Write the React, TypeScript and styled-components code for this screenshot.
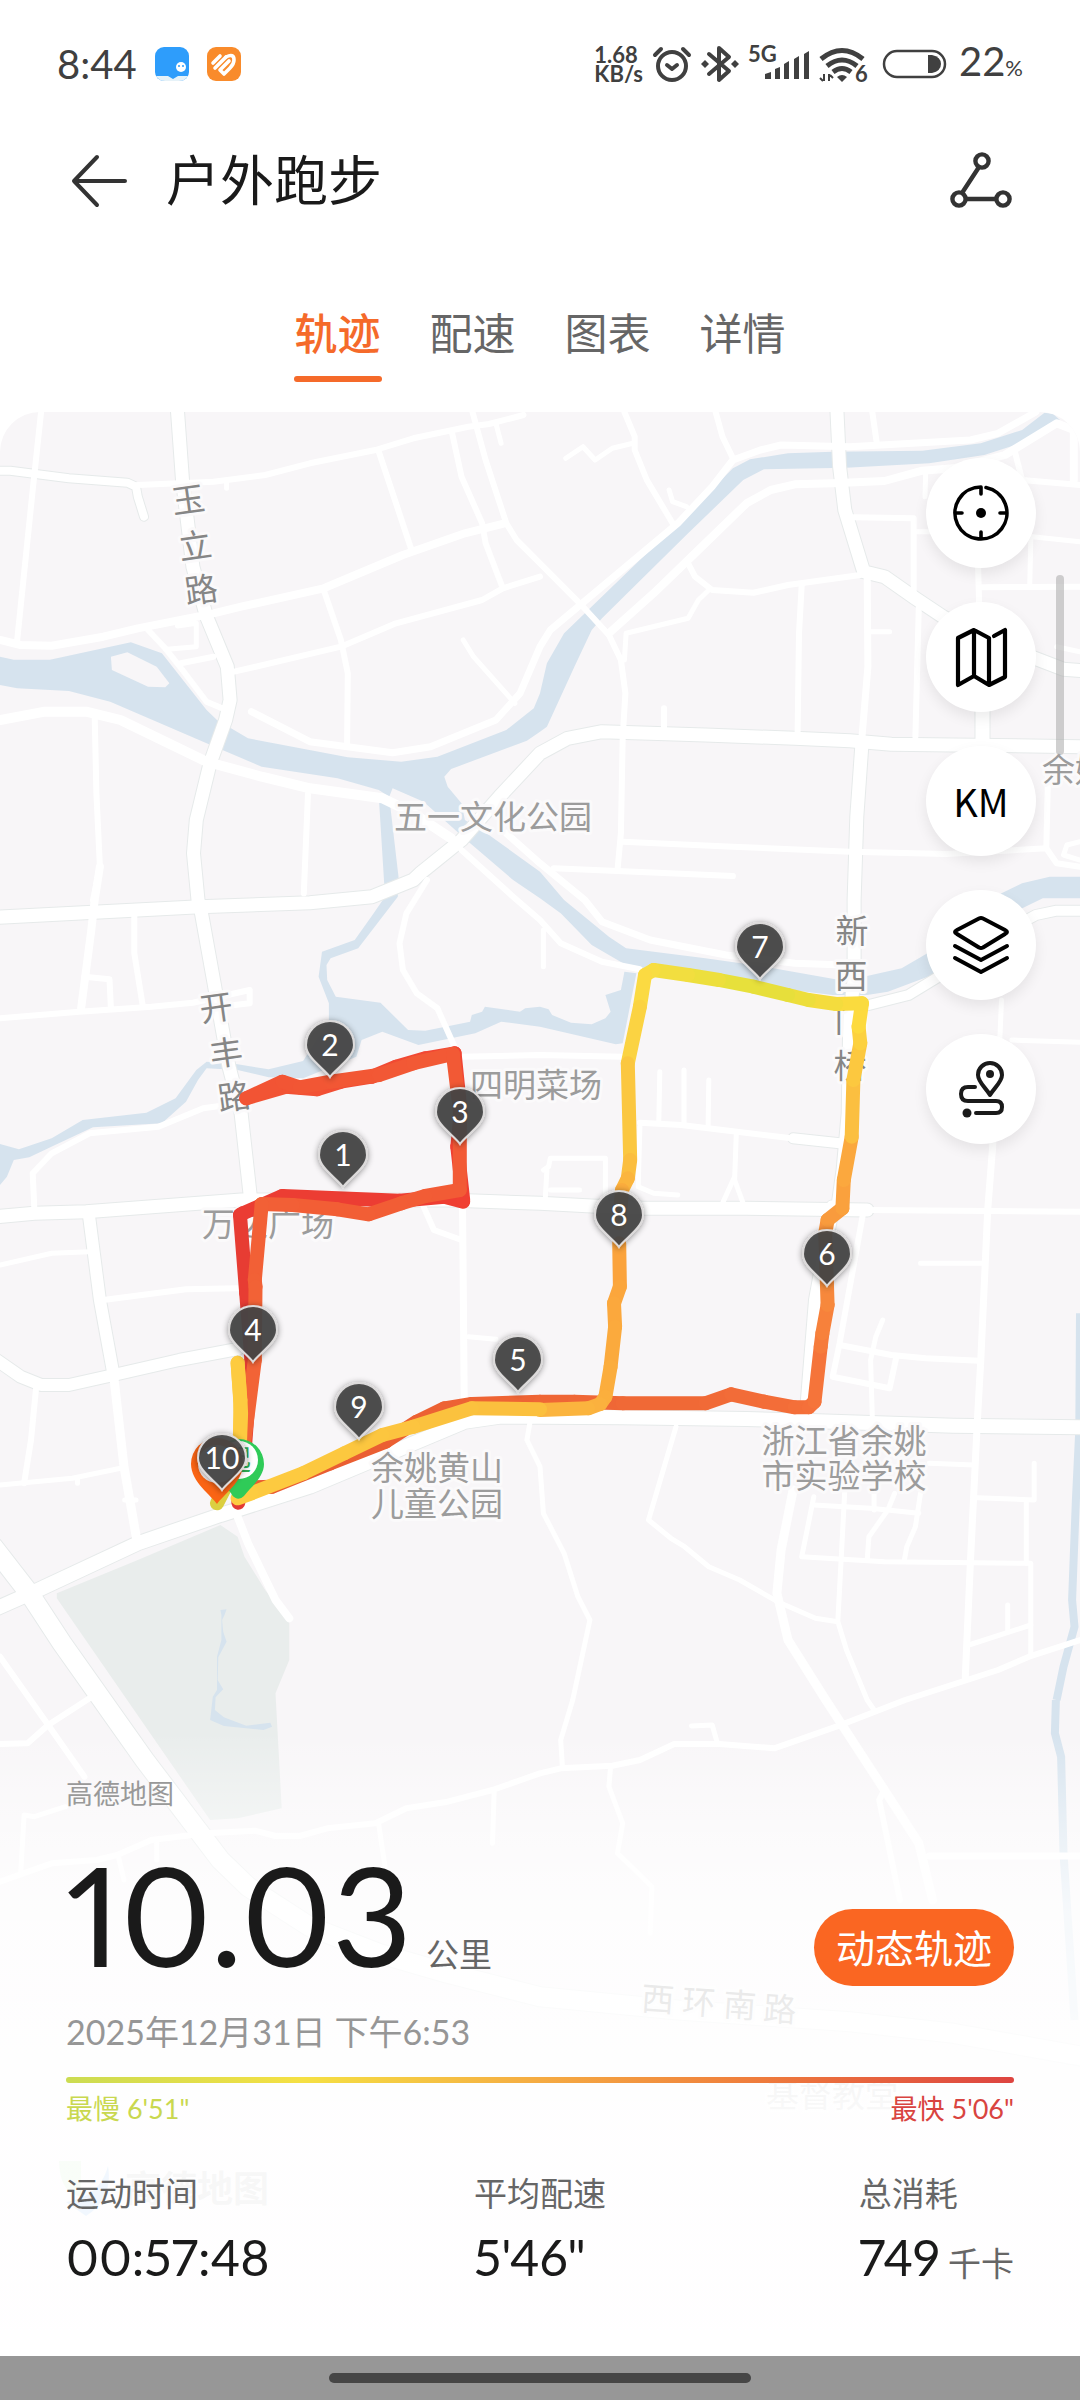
import React from "react";
import styled, { createGlobalStyle, css } from "styled-components";

const GlobalStyle = createGlobalStyle`
  *, *::before, *::after { box-sizing: border-box; }
  html, body { margin: 0; background: #fff; }
  body {
    font-family: Lato, "Noto Sans CJK SC", sans-serif;
    color: #1a1a1a;
    overflow-x: hidden;
  }
  button { font: inherit; color: inherit; border: 0; padding: 0; background: none; cursor: pointer; }
  svg { display: block; overflow: visible; }
`;

/* ---------- map geometry ---------- */

/* Geometry is stored tile by tile. A letter switches the tile, numbers are
   x/y pairs in that tile's own grid. */
const TILES: Record<string, [number, number]> = {
  A: [0, 400],
  B: [540, 400],
  C: [0, 880],
  D: [540, 880],
  E: [0, 1200],
  F: [540, 1200],
  G: [0, 1560],
  H: [540, 1700],
};
const UNIT_X = 540 / 1568;
const UNIT_Y = 1 / 3;

type Point = [number, number];

function points(spec: string): Point[] {
  const out: Point[] = [];
  let tile: Point = [0, 0];
  let pendingX: number | null = null;
  for (const token of spec.split(/[\s,]+/)) {
    if (TILES[token]) {
      tile = TILES[token];
    } else if (pendingX === null) {
      pendingX = Number(token);
    } else {
      out.push([
        Math.round((tile[0] + pendingX * UNIT_X) * 10) / 10,
        Math.round((tile[1] + Number(token) * UNIT_Y) * 10) / 10,
      ]);
      pendingX = null;
    }
  }
  return out;
}

const line = (spec: string) => "M" + points(spec).map((p) => p.join(" ")).join("L");
const area = (spec: string) => line(spec) + "Z";

const WATER = [
  "A 0 770,40 779,145 779,380 727,470 760,600 930,630 960,720 1015,1010 1072,1165 1085,1270 1070,1470 990,1550 925,1568 880 B 20 790,70 700,125 645,400 370,560 205,610 178,720 160,850 155,1110 152,1280 130,1400 90,1465 38,1490 42,1510 60,1380 135,1290 165,1130 190,890 203,650 208,590 240,430 400,180 655,150 690,100 800,20 980,0 995 A 1530 1022,1310 1107,1290 1130,1300 1160,1340 1210,1350 1260,1420 1305,1568 1415 B 70 1500 D 200 170,250 205,480 235,640 258,870 300,940 290,1050 265,1125 220,1340 40,1400 10,1480 -10,1568 -10,1568 55,1460 55,1390 90,1280 200,1140 285,1010 335,950 345,850 345,770 335,300 275,250 255,150 195,60 100,0 55 C 1490 0 A 1360 1325,1300 1270,1230 1205,1140 1165,1130 1190,1100 1170,980 1135,760 1100,600 1030,320 905,200 873,50 865,0 855",
  "A 1100 1190,1130 1190,1157 1430 C 1155 50,1040 205,960 235,948 255,950 300,975 350,1105 368,1185 450,1235 452,1365 425,1370 405,1400 395,1408 380,1510 395,1525 385,1568 380 D 25 388,35 405,90 428,150 433,190 415,205 395,190 345,235 330,245 275,280 280,240 490,220 493,0 440 C 1455 425,1380 460,1215 495,1110 455,1050 480,1035 530,880 595,780 592,690 570,600 565,575 600,540 665,470 730,270 742,160 795,85 832,40 840,20 890,0 915,0 792,55 808,150 775,240 720,425 698,510 655,570 570,600 545,690 553,780 568,880 543,955 420,955 370,925 290,935 215,1030 180,1085 100,1118 50",
];
const ISLAND = "A 322 770,370 757,455 800,492 850,480 862,430 860,325 810";
const PARK =
  "E 165 1180,400 1080,640 975,690 1010,710 1070 G 770 90,840 180,840 300,800 400,818 745,690 775,610 780,165 115";
const POND =
  "G 640 150,658 148,652 165,645 180,648 215,658 245,634 292,632 360,648 388,626 412,624 450,650 472,715 497,785 488,790 500,765 510,650 498,610 480,618 410,630 390,630 290,643 240,643 165";
const CANALS = [
  "F 1568 340,1566 690,1556 900,1545 1200,1552 1280,1520 1400,1500 1500",
  "H 1498 0,1495 100,1513 170,1520 460,1552 960",
];

/* [width, geometry] */
const MAJOR: [number, string][] = [
  [13, "A 515 30,530 240,560 500,600 650,660 800,668 900,655 960,610 1090,570 1260,562 1360,575 1500 C 585 100,620 300,665 560,700 700,728 960"],
  [8, "A 0 212,30 212,200 235,370 248,395 260,400 290,418 350"],
  [13, "C -10 112,580 80,900 68,1080 50,1200 0 A 1220 1420,1340 1320,1450 1190,1568 1060 B 80 1015,180 995,480 1005,740 1015,900 1022,1020 1033,1200 1035,1580 1040"],
  [13, "B 862 30,870 200,885 330,940 515,1000 530,1090 595,1170 650,1300 720,1450 780,1520 808,1580 812"],
  [13, "B 935 1030,920 1250,912 1500 D 912 300,900 400,895 700,880 870,865 980 F 850 20,800 300,775 620"],
  [13, "C -10 1010,100 1000,250 995,700 960,1300 960,1568 970 D 150 978,300 985,600 985,950 990"],
  [14, "E -10 1225,110 1170,400 1030,640 945,900 860,1350 665,1450 650,1568 650 F 240 652,600 657,700 660,1200 677,1580 682"],
  [19, "G -20 -40,85 100,180 250,420 600,640 900,720 980,900 1100,1100 1180,1300 1240 H 0 890,400 930,900 965,1200 1000,1580 1070"],
  [12, "E 258 45,290 300,330 525"],
  [12, "E -10 480,60 530,120 555,200 555,330 525,520 480,690 447"],
  [14, "B 1285 930,1285 1030"],
  [10, "D 955 375,1070 345,1150 295,1290 190,1440 105,1500 92,1580 92"],
  [10, "D 735 775,870 790"],
];

const MINOR: [number, string][] = [
  [10, "A 0 960,130 935,250 935,350 960,600 1085,760 1130,900 1165,1110 1195,1200 1240,1310 1315"],
  [8, "A 0 720,60 735,150 737,300 710,400 685,620 640,700 620,940 565,1170 465,1350 400,1465 370"],
  [6, "A 120 30,95 270,50 720"],
  [6, "A 400 255,620 245,770 225,900 190,1090 150,1200 115,1360 80,1420 72,1520 45"],
  [5, "A 658 240,658 265"],
  [6, "A 1100 155,1150 310,1195 450"],
  [6, "A 1372 36,1410 180,1470 370,1500 420,1568 490 B 125 620,200 705,235 780,248 880,240 1010,235 1300,225 1410"],
  [6, "A 1312 95,1340 230,1400 370,1410 430,1460 565"],
  [5, "A 1440 70,1455 130"],
  [6, "A 680 815,990 740,1150 670,1400 600,1460 565,1568 530"],
  [6, "A 940 570,990 720,1010 820,1008 1030"],
  [7, "A 730 935,900 1025,1140 1058,1250 1040,1440 960,1510 880,1568 740 B 30 690,400 370,500 260,560 180,640 150,700 135,900 140,1250 120,1330 100,1440 36"],
  [5, "A 1345 720,1375 770,1495 910"],
  [6, "A 430 690,480 745,530 810,600 905,645 925"],
  [5, "A 485 748,570 740,570 670,515 678"],
  [6, "A 525 790,620 770"],
  [6, "A 275 950,280 1180,290 1400,270 1500"],
  [8, "A 290 1400,275 1500 C 265 150,235 390"],
  [6, "A 895 1165,882 1480"],
  [6, "C 1240 0,1180 100,1160 190,1170 270,1210 340,1270 385,1320 500"],
  [6, "A 1340 1350,1490 1490 C 1568 120 D 60 190,180 245,290 268"],
  [7, "A 1470 1300,1568 1390 B 130 1500 D 180 125,320 180,540 225,740 250,880 255"],
  [6, "B 245 36,275 110,275 150,310 240,385 370"],
  [5, "B 75 175,125 140,160 180,210 145,270 130"],
  [6, "B 510 36,530 110,560 175"],
  [5, "B 375 270,385 305,425 320"],
  [6, "B 965 36,978 130"],
  [8, "B 200 700,330 580,430 480,600 310,670 270,740 253,850 250,1000 243,1110 212,1200 205,1350 165,1500 70,1550 90,1550 240"],
  [6, "B 430 490,450 530,500 570,620 578,720 555,930 525"],
  [5, "B 490 570,460 600,430 655,250 700,245 780"],
  [6, "B 760 555,752 700,748 1000"],
  [7, "B 950 530,952 800,935 1010"],
  [5, "B 955 695,1015 695"],
  [6, "B 910 352,1085 355,1085 580"],
  [5, "B 1085 395,1130 395"],
  [5, "B 1120 215,1118 290"],
  [6, "B 1100 620,1090 1010"],
  [6, "B 1380 160,1400 240,1568 255"],
  [5, "B 1430 410,1568 425"],
  [5, "B 1425 420,1422 560"],
  [6, "B 1272 500,1275 610"],
  [6, "B 1280 562,1568 560"],
  [5, "B 1500 740,1568 755"],
  [6, "B 360 925,360 985"],
  [6, "B 240 1325,560 1340,900 1355,1180 1362,1470 1345,1500 1390,1568 1400"],
  [6, "B 1475 1130,1470 1345"],
  [5, "B 1568 1325,1530 1335,1520 1365,1568 1380"],
  [6, "B 40 1405,560 1428"],
  [6, "C 0 415,230 395,440 380,560 368,725 330,725 370,600 385"],
  [6, "C 245 290,318 298,322 385"],
  [6, "C 390 100,390 220,415 380"],
  [6, "C 100 990,95 880,150 820,260 760,460 740,590 685,680 672"],
  [6, "C 1340 530,1568 525 D 240 530"],
  [6, "C 1230 980,1260 1050,1340 1080"],
  [7, "C 1343 975,1345 1200 E 1348 600"],
  [5, "E 1360 410,1440 418"],
  [5, "C 0 1155,150 1120,260 1115"],
  [6, "E 300 300,540 268,690 265"],
  [9, "E 330 525,360 800,398 1025"],
  [6, "E 105 560,90 720,70 850"],
  [5, "E 0 855,210 835,350 805"],
  [5, "E 225 840,225 850"],
  [5, "E 362 900,395 900"],
  [8, "E 690 950,720 1030,800 1200 G 840 175"],
  [5, "E 1540 660,1530 720,1568 800 F 0 800,10 940,70 1060,110 1190,145 1260,95 1500 H 60 120,65 200"],
  [5, "D 10 150,10 260"],
  [6, "D 290 728,410 735,530 750,730 775"],
  [5, "D 348 575,345 725"],
  [5, "D 418 570,418 730"],
  [5, "D 490 600,488 740"],
  [5, "D 570 760,565 900,590 970"],
  [5, "D 565 890,530 970"],
  [5, "D 290 740,285 920,330 940,400 945"],
  [5, "D 10 870,25 860,30 835,190 835,190 960"],
  [5, "D 20 870,15 960"],
  [5, "D 30 930,115 930"],
  [6, "D 950 990,1568 995"],
  [5, "D 1340 360,1335 480"],
  [5, "D 1370 480,1568 487"],
  [7, "D 1315 790,1300 990 F 1280 480,1270 660,1250 1080,1235 1430"],
  [6, "F 940 30,870 430,850 530,1015 565,1035 470"],
  [6, "F 870 435,1020 465,1120 475,1275 482"],
  [5, "F 995 360,975 410,960 480,965 650"],
  [5, "F 1105 190,1285 190"],
  [5, "F 395 680,315 960,380 1015,420 1040,490 1100,580 1140,690 1205,800 1255,865 1265,890 1350,950 1500 H 970 30"],
  [9, "F 735 870,700 1050,688 1180,720 1320,830 1500 H 1000 270,1100 430,1140 600"],
  [6, "H 1000 270,985 300,1045 600"],
  [5, "F 1130 790,1260 795"],
  [5, "F 795 890,760 1070,1000 1085,1425 1090,1425 1360"],
  [5, "F 795 915,960 925,1100 940"],
  [5, "F 885 870,875 1070,865 1260"],
  [5, "F 1030 880,1010 930,955 1010,950 1080"],
  [5, "F 1105 880,1090 980,1065 1040,1058 1080"],
  [5, "F 970 870,970 930"],
  [5, "F 1270 893,1435 900,1435 790"],
  [5, "F 1412 900,1412 1090"],
  [5, "F 1245 1335,1425 1275"],
  [5, "F 1358 1215,1358 1290"],
  [6, "F 1568 1320,1420 1370,1330 1410,1060 1500 H 860 80,680 145,520 132,390 132,290 180,210 197,60 205,0 220 G 1430 690,1300 725,1180 745,1090 790,950 805,870 828,800 828,740 812,600 820,440 840,340 885,280 900,150 910,0 965"],
  [5, "H 440 78,500 75,515 130"],
  [5, "H 205 200,200 260,240 370,225 460,325 560,320 700"],
  [7, "H 1130 468,1568 468"],
  [6, "G 0 290,140 495,245 650"],
  [6, "G 0 552,80 550,140 495,260 415"],
  [5, "G 190 740,100 770,70 765,60 940"],
  [5, "G 455 850,455 900"],
  [5, "G 345 895,360 960"],
  [5, "G 1100 795,1118 920"],
  [5, "G 1435 690,1430 850"],
];

/* One leg of the run: geometry plus the pace colours at its two ends. */
interface Leg { geometry: string; from: string; to: string }
const LEGS: Leg[] = [
  { geometry: "E 692 908,710 760,730 480,715 280,697 45 C 705 1000,820 948,1160 962,1290 950,1345 965", from: "#e23a34", to: "#f03e32" },
  { geometry: "C 1345 960,1328 800,1338 700,1320 520,1235 535,1150 560,1080 590,990 605,920 628,830 620,715 655", from: "#f03e32", to: "#f25434" },
  { geometry: "C 715 655,820 605,870 622,960 605,1100 585,1200 550,1315 522,1335 690,1335 930,1235 948,1165 970,1070 1003,980 988,850 975,760 972,740 1200 E 742 260,740 480,700 800", from: "#f25434", to: "#f26336" },
  { geometry: "E 740 862,790 860,960 790,1120 725,1210 665,1290 625,1370 612,1568 605 F 100 605,240 610,480 610,555 583,650 605,740 622,780 622,797 605", from: "#e85a30", to: "#f5713a" },
  { geometry: "F 797 605,815 440,820 400,835 315,833 250 D 828 1060,835 1020,878 985,882 900,905 770", from: "#f5713a", to: "#fbab3e" },
  { geometry: "D 905 770,910 600,930 490,925 440,935 370", from: "#fbba40", to: "#fdde3e" },
  { geometry: "D 935 370,860 372,780 360,720 345,620 320", from: "#fdda3e", to: "#e4e03a" },
  { geometry: "D 620 320,520 300,430 285,330 270,305 285", from: "#e4e03a", to: "#fbdd42" },
  { geometry: "D 305 285,290 380,255 550", from: "#fbdd42", to: "#fbd042" },
  { geometry: "D 255 550,262 840,255 895,238 930,230 1030", from: "#fbcb40", to: "#fba83c" },
  { geometry: "F 230 130,232 260,215 310,218 380,205 500,190 590,175 612,140 625,0 630", from: "#fba23c", to: "#fbb53e" },
  { geometry: "E 1568 628,1370 625,1200 680,1110 705,1000 760,880 820,730 880,690 895", from: "#fbbf3e", to: "#fdcd40" },
  { geometry: "E 695 860,698 600,690 488,700 640,695 780", from: "#fdcb40", to: "#fdcb40" },
  { geometry: "E 695 780,660 850,630 910", from: "#fdcb40", to: "#cfd040" },
];

function mix(from: string, to: string, t: number) {
  const channel = (hex: string, i: number) => parseInt(hex.slice(1 + i * 2, 3 + i * 2), 16);
  return `rgb(${[0, 1, 2]
    .map((i) => Math.round(channel(from, i) + (channel(to, i) - channel(from, i)) * t))
    .join(",")})`;
}

function RouteLeg({ geometry, from, to }: Leg) {
  const pts = points(geometry);
  return (
    <g>
      {pts.slice(1).map((p, i) => (
        <line
          key={i}
          x1={pts[i][0]}
          y1={pts[i][1]}
          x2={p[0]}
          y2={p[1]}
          stroke={mix(from, to, (i + 0.5) / (pts.length - 1))}
        />
      ))}
    </g>
  );
}

const KILOMETRES: [string, number, number][] = [
  ["1", 343, 1187],
  ["2", 330, 1077],
  ["3", 460, 1144],
  ["4", 253, 1362],
  ["5", 518, 1392],
  ["6", 827, 1286],
  ["7", 760, 979],
  ["8", 619, 1247],
  ["9", 359, 1439],
  ["10", 222, 1490],
];
const PIN = "M0 0C-5 -8 -24 -19 -24 -32A24 24 0 0 1 24 -32C24 -19 5 -8 0 0Z";

const MapSvg = styled.svg`
  position: absolute;
  inset: 0;
  width: 100%;
  height: 100%;
`;
const PlaceText = styled.text<{ $road?: boolean }>`
  font-family: "Noto Sans CJK SC", sans-serif;
  font-size: 33px;
  fill: ${(p) => (p.$road ? "#868686" : "#9c9c9c")};
  stroke: #fbfafb;
  stroke-width: 6px;
  stroke-linejoin: round;
  paint-order: stroke;
  text-anchor: middle;
`;
const StartText = styled.text`
  font-family: "Noto Sans CJK SC", sans-serif;
  font-size: 28px;
  fill: #2fae52;
  text-anchor: middle;
`;
const PinText = styled.text`
  font-size: 30px;
  fill: #fff;
  text-anchor: middle;
`;
const WatermarkText = styled.text`
  font-family: "Noto Sans CJK SC", sans-serif;
  font-size: 36px;
  font-weight: 700;
  fill: #8a8a8a;
`;

function RunMap() {
  return (
    <MapSvg viewBox="0 412 1080 1944" preserveAspectRatio="xMidYMin slice" role="img" aria-label="轨迹">
      <defs>
        <filter id="pinShadow" x="-40%" y="-40%" width="180%" height="180%">
          <feDropShadow dx="0" dy="1" stdDeviation="3" floodColor="#000" floodOpacity="0.45" />
        </filter>
      </defs>
      <rect x="0" y="412" width="1080" height="1918" fill="#f8f6f8" />
      <path d={area(PARK)} fill="#e9edec" />
      <g fill="#d6e3ee">
        {WATER.map((w, i) => <path key={i} d={area(w)} />)}
        <path d={area(POND)} />
      </g>
      <path d={area(ISLAND)} fill="#f8f6f8" />
      <g fill="none" strokeLinejoin="round">
        {CANALS.map((c, i) => <path key={i} d={line(c)} stroke="#d6e3ee" strokeWidth="8" />)}
        <g stroke="#e6eaea">
          {MAJOR.map(([w, d], i) => <path key={i} d={line(d)} strokeWidth={w + 2} strokeLinecap="round" />)}
        </g>
        <g stroke="#fff" strokeLinecap="round">
          {MINOR.map(([w, d], i) => <path key={i} d={line(d)} strokeWidth={w} />)}
          {MAJOR.map(([w, d], i) => <path key={i} d={line(d)} strokeWidth={w} />)}
        </g>
      </g>

      <PlaceText $road x="190 197 203" y="514 560 604" rotate="-8">玉立路</PlaceText>
      <PlaceText $road x="218 228 236" y="1022 1067 1111" rotate="-8">开丰路</PlaceText>
      <PlaceText $road x="852 851 851 850" y="943 988 1032 1078">新西门桥</PlaceText>
      <PlaceText $road x="657 698 739 779" y="2010 2013 2016 2020" rotate="4">西环南路</PlaceText>
      <PlaceText x="493" y="829">五一文化公园</PlaceText>
      <PlaceText x="536" y="1097">四明菜场</PlaceText>
      <PlaceText x="268" y="1236">万达广场</PlaceText>
      <PlaceText x="437" y="1480">余姚黄山</PlaceText>
      <PlaceText x="437" y="1516">儿童公园</PlaceText>
      <PlaceText x="844" y="1453">浙江省余姚</PlaceText>
      <PlaceText x="844" y="1488">市实验学校</PlaceText>
      <PlaceText x="1075" y="782">余姚</PlaceText>
      <PlaceText x="832" y="2107">基督教堂</PlaceText>

      <path d="M59 2161h22v36c-14-4-21-12-22-36z" fill="#a5e09a" />
      <path d="M108 2166c-6 22-20 32-42 36l20 14c16-10 26-26 22-50z" fill="#2f8cf4" />
      <WatermarkText x="125" y="2202">高德地图</WatermarkText>

      <g fill="none" strokeWidth="14" strokeLinecap="round" strokeLinejoin="round">
        {LEGS.map((leg, i) => <RouteLeg key={i} {...leg} />)}
      </g>

      <g transform="translate(239 1499)">
        <path d="M-7 -4C-9 -10 -25 -20 -25 -35A25 25 0 0 1 25 -35C25 -22 12 -12 5 -3Q-1 3 -7 -4Z" fill="#2fcb58" />
        <circle cy="-39" r="19" fill="#fff" />
        <StartText x="-2" y="-29">起</StartText>
      </g>
      <g transform="translate(217 1504)">
        <path d="M0 0C-5 -8 -26 -22 -26 -40A26 26 0 0 1 26 -40C26 -22 5 -8 0 0Z" fill="#fa6414" />
        <circle cy="-40" r="19" fill="#f4eeee" />
      </g>

      {KILOMETRES.map(([label, x, y]) => (
        <g key={label} transform={`translate(${x} ${y})`}>
          <path d={PIN} fill="#454545" fillOpacity="0.92" stroke="#dcdada" strokeWidth="2" filter="url(#pinShadow)" />
          <PinText x="0" y="-21">{label}</PinText>
        </g>
      ))}
    </MapSvg>
  );
}

/* ---------- status bar ---------- */

const StatusBar = styled.header`
  height: 128px;
  padding: 0 57px;
  display: flex;
  align-items: center;
  justify-content: space-between;
  color: #404040;
`;
const StatusGroup = styled.div<{ $gap: number }>`
  display: flex;
  align-items: center;
  gap: ${(p) => p.$gap}px;
`;
const Clock = styled.time`
  font-size: 40px;
  line-height: 48px;
`;
const Speed = styled.div`
  font-size: 22px;
  line-height: 19px;
  font-weight: 700;
`;
const Percent = styled.div`
  font-size: 40px;
  line-height: 48px;
  small { font-size: 22px; }
`;
const SignalText = styled.text`
  font-size: 22px;
  font-weight: 700;
  fill: #404040;
`;

function Status() {
  return (
    <StatusBar>
      <StatusGroup $gap={18}>
        <Clock>8:44</Clock>
        <svg width="34" height="34" viewBox="0 0 34 34">
          <rect width="34" height="34" rx="9" fill="#2e9dfb" />
          <path d="M1 29h12l5 3 5-3h10q-3 5-9 5H10q-6 0-9-5z" fill="#e6f2f8" />
          <circle cx="26" cy="20" r="5" fill="#fff" />
          <circle cx="24" cy="19" r="1" fill="#2e9dfb" />
          <circle cx="28" cy="19" r="1" fill="#2e9dfb" />
        </svg>
        <svg width="34" height="34" viewBox="0 0 34 34">
          <rect width="34" height="34" rx="9" fill="#f98b2b" />
          <g fill="none" stroke="#fff" strokeWidth="3.6" strokeLinecap="round" strokeLinejoin="round">
            <path d="M6 16l7-7M8 21L19 10M11 26" />
            <path d="M19 10q8-4 8 3 0 4-4 8l-6 6-4-4 9-9" />
          </g>
        </svg>
      </StatusGroup>
      <StatusGroup $gap={9}>
        <Speed>1.68<br />KB/s</Speed>
        <svg width="40" height="40" viewBox="0 0 40 40" fill="none" stroke="#404040" strokeWidth="4" strokeLinecap="round">
          <circle cx="20" cy="22" r="14" />
          <path d="M3 11l6-6M37 11l-6-6" />
          <path d="M15 21l5 4 5-4" strokeLinejoin="round" />
        </svg>
        <svg width="38" height="40" viewBox="0 0 38 40" fill="none" stroke="#404040" strokeWidth="4" strokeLinejoin="round">
          <path d="M8 10l20 17-10 9V4l10 9L8 30" strokeLinecap="round" />
          <path d="M4 16l4 4-4 4-4-4zM34 16l4 4-4 4-4-4z" fill="#404040" stroke="none" />
        </svg>
        <svg width="62" height="40" viewBox="0 0 62 40">
          <SignalText x="0" y="18">5G</SignalText>
          <path d="M17 30l6-2v7h-6zM27 25l5-2v12h-5zM36 20l5-3v18h-5zM46 15l5-3v23h-5zM56 10l5-3v28h-5z" fill="#404040" />
        </svg>
        <svg width="47" height="40" viewBox="0 0 47 40" fill="none" stroke="#404040" strokeWidth="5">
          <path d="M2 15q21-17 42 0M8 22q15-12 30 0M14 28q9-7 18 0" />
          <path d="M18 33q5-4 10 0l-5 5z" fill="#404040" stroke="none" />
          <path d="M5 30v7M10 30v7M1 34l3 3M11 31l3 3" strokeWidth="2" />
          <SignalText x="36" y="38" stroke="none">6</SignalText>
        </svg>
        <svg width="75" height="30" viewBox="0 0 75 30">
          <rect x="9" y="2" width="61" height="26" rx="13" fill="none" stroke="#404040" strokeWidth="2.5" />
          <path d="M53 6h4q9 2 9 9t-9 9h-4z" fill="#404040" />
        </svg>
        <Percent>22<small>%</small></Percent>
      </StatusGroup>
    </StatusBar>
  );
}

/* ---------- page ---------- */

const Page = styled.div`
  min-height: 100vh;
  display: flex;
  flex-direction: column;
  background: #fff;
`;
const TitleBar = styled.div`
  height: 106px;
  padding: 0 66px;
  display: flex;
  align-items: center;
  gap: 34px;
`;
const Title = styled.h1`
  flex: 1;
  margin: 0;
  font-size: 54px;
  line-height: 64px;
  font-weight: 400;
`;
const Tabs = styled.div`
  padding: 75px 0 30px;
  display: flex;
  justify-content: center;
  gap: 47px;
`;
const Tab = styled.button<{ $active?: boolean }>`
  display: flex;
  flex-direction: column;
  align-items: stretch;
  gap: 17px;
  min-width: 88px;
  text-align: center;
  font-size: 43px;
  line-height: 50px;
  color: #666;
  &::after {
    content: "";
    height: 6px;
    border-radius: 3px;
  }
  ${(p) => p.$active && css`
    color: #f56a2a;
    font-weight: 500;
    &::after { background: #f56a2a; }
  `}
`;
const Stage = styled.main`
  position: relative;
  flex: 1;
  display: flex;
  flex-direction: column;
  overflow: hidden;
  border-radius: 40px 40px 0 0;
`;
const Tools = styled.div`
  position: relative;
  align-self: flex-end;
  display: flex;
  flex-direction: column;
  gap: 34px;
  padding: 46px 44px 0 0;
`;
const ToolButton = styled.button`
  width: 110px;
  height: 110px;
  border-radius: 50%;
  background: #fff;
  color: #000;
  display: grid;
  place-items: center;
  box-shadow: 0 6px 14px rgba(0, 0, 0, 0.08);
  font: 400 38px/44px "Noto Sans CJK SC", sans-serif;
`;
const ScrollThumb = styled.div`
  position: absolute;
  top: 163px;
  right: 16px;
  width: 8px;
  height: 180px;
  border-radius: 4px;
  background: rgba(170, 170, 170, 0.55);
`;
const Panel = styled.section`
  position: relative;
  margin-top: auto;
  padding: 76px 66px 69px;
  background: linear-gradient(
    rgba(255, 255, 255, 0) 0,
    rgba(255, 255, 255, 0) 30px,
    rgba(255, 255, 255, 0.5) 130px,
    rgba(255, 255, 255, 0.78) 210px,
    rgba(255, 255, 255, 0.84) 310px,
    rgba(255, 255, 255, 0.93) 400px,
    rgba(255, 255, 255, 0.94) 100%
  );
`;
const Attribution = styled.div`
  font-size: 27px;
  line-height: 32px;
  color: #999;
`;
const DistanceRow = styled.div`
  margin-top: 32px;
  display: flex;
  align-items: flex-end;
  justify-content: space-between;
`;
const Distance = styled.div`
  display: flex;
  align-items: baseline;
  gap: 14px;
  font-size: 138px;
  line-height: 144px;
  font-variant-numeric: proportional-nums;
`;
const Unit = styled.span`
  font-size: 33px;
  line-height: 40px;
  color: #666;
`;
const PlayButton = styled.button`
  height: 77px;
  padding: 0 22px;
  border-radius: 39px;
  background: #fa6622;
  color: #fff;
  font-size: 39px;
  line-height: 48px;
`;
const DateText = styled.div`
  margin-top: 26px;
  font-size: 34px;
  line-height: 40px;
  color: #969696;
`;
const PaceBar = styled.div`
  margin-top: 25px;
  height: 6px;
  border-radius: 3px;
  background: linear-gradient(90deg, #cbdc52 0, #f5e043 25%, #f5ab42 50%, #ef7e3c 72%, #dd4440 100%);
`;
const PaceEnds = styled.div`
  margin-top: 10px;
  display: flex;
  justify-content: space-between;
  font-size: 27px;
  line-height: 32px;
`;
const PaceEnd = styled.span<{ $color: string }>`
  color: ${(p) => p.$color};
`;
const Stats = styled.dl`
  margin: 48px 0 0;
  display: grid;
  grid-template-columns: 1fr auto 1fr;
`;
const Stat = styled.div`
  &:last-child { justify-self: end; }
`;
const StatLabel = styled.dt`
  font-size: 33px;
  line-height: 40px;
  color: #666;
`;
const StatValue = styled.dd`
  margin: 14px 0 0;
  display: flex;
  align-items: baseline;
  gap: 8px;
  font-size: 50px;
  line-height: 60px;
  font-variant-numeric: proportional-nums;
`;
const GestureBar = styled.footer`
  height: 44px;
  display: grid;
  place-items: center;
  background: #979797;
`;
const Handle = styled.div`
  width: 39%;
  height: 10px;
  border-radius: 5px;
  background: #464646;
`;

const TAB_NAMES = ["轨迹", "配速", "图表", "详情"];

const STATS = [
  { label: "运动时间", value: "00:57:48" },
  { label: "平均配速", value: "5'46\"" },
  { label: "总消耗", value: "749", unit: "千卡" },
];

export default function App() {
  return (
    <Page>
      <GlobalStyle />
      <Status />
      <TitleBar>
        <button aria-label="返回">
          <svg width="66" height="66" viewBox="0 0 66 66" fill="none" stroke="#333" strokeWidth="4" strokeLinecap="round" strokeLinejoin="round">
            <path d="M59 33H8M31 9L8 33l23 24" />
          </svg>
        </button>
        <Title>户外跑步</Title>
        <button aria-label="分享">
          <svg width="66" height="66" viewBox="0 0 66 66" fill="none" stroke="#333" strokeWidth="4.4">
            <circle cx="34" cy="13" r="6.600" />
            <circle cx="11" cy="51" r="6.600" />
            <circle cx="55" cy="51" r="6.600" />
            <path d="M31 19L14 45M18 51h30" />
          </svg>
        </button>
      </TitleBar>
      <Tabs role="tablist">
        {TAB_NAMES.map((name, i) => (
          <Tab key={name} role="tab" aria-selected={i === 0} $active={i === 0}>{name}</Tab>
        ))}
      </Tabs>
      <Stage>
        <RunMap />
        <Tools>
          <ToolButton aria-label="定位">
            <svg width="60" height="60" viewBox="0 0 60 60" fill="none" stroke="#000" strokeWidth="3.6" strokeLinecap="round">
              <path d="M35 4.500A26 26 0 1 1 30 4M30 4v7M30 56v-7M4 30h7M56 30h-7" />
              <circle cx="30" cy="30" r="5" fill="#000" stroke="none" />
            </svg>
          </ToolButton>
          <ToolButton aria-label="地图">
            <svg width="60" height="60" viewBox="0 0 60 60" fill="none" stroke="#000" strokeWidth="4.2" strokeLinecap="round" strokeLinejoin="round">
              <path d="M43 9l11-6v47l-16 8-15-9-16 9V11l16-8 15 8v47M23 3v46" />
            </svg>
          </ToolButton>
          <ToolButton>KM</ToolButton>
          <ToolButton aria-label="图层">
            <svg width="60" height="60" viewBox="0 0 60 60" fill="none" stroke="#000" strokeWidth="4" strokeLinecap="round" strokeLinejoin="round">
              <path d="M28 3.500q2-1 4 0l22 11.500q4 2 0 4L32 32.500q-2 1-4 0L6 19q-4-2 0-4z" />
              <path d="M4 31l26 14 26-14M4 43l26 14 26-14" />
            </svg>
          </ToolButton>
          <ToolButton aria-label="路线">
            <svg width="60" height="60" viewBox="0 0 60 60" fill="none" stroke="#1a1a1a" strokeWidth="4" strokeLinecap="round" strokeLinejoin="round">
              <path d="M39 36C35 29 27 23 27 16a12 12 0 0 1 24 0c0 7-8 13-12 20z" />
              <circle cx="39" cy="15" r="4" fill="#1a1a1a" stroke="none" />
              <path d="M24 28h-7q-7 0-7 7t7 7h28q6 0 6 6t-6 6H25" />
              <circle cx="16" cy="54" r="4.500" fill="#1a1a1a" stroke="none" />
            </svg>
          </ToolButton>
        </Tools>
        <ScrollThumb />
        <Panel>
          <Attribution>高德地图</Attribution>
          <DistanceRow>
            <Distance>10.03<Unit>公里</Unit></Distance>
            <PlayButton>动态轨迹</PlayButton>
          </DistanceRow>
          <DateText>2025年12月31日 下午6:53</DateText>
          <PaceBar />
          <PaceEnds>
            <PaceEnd $color="#c9d84f">最慢 6'51"</PaceEnd>
            <PaceEnd $color="#d94440">最快 5'06"</PaceEnd>
          </PaceEnds>
          <Stats>
            {STATS.map(({ label, value, unit }) => (
              <Stat key={label}>
                <StatLabel>{label}</StatLabel>
                <StatValue>{value}{unit && <Unit>{unit}</Unit>}</StatValue>
              </Stat>
            ))}
          </Stats>
        </Panel>
      </Stage>
      <GestureBar><Handle /></GestureBar>
    </Page>
  );
}
